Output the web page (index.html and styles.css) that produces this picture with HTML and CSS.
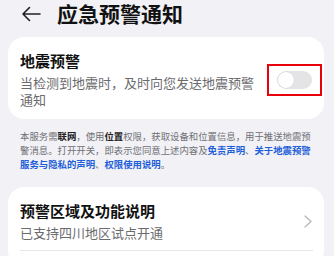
FILE: index.html
```html
<!DOCTYPE html>
<html lang="zh-CN">
<head>
<meta charset="utf-8">
<link rel="stylesheet" href="styles.css">
</head>
<body>
<div class="page">
  <header class="header">
    <svg class="back" width="20" height="16" viewBox="0 0 20 16"><path d="M19 8H2M8.5 1.5L2 8l6.5 6.5" fill="none" stroke="#222" stroke-width="1.6" stroke-linecap="round" stroke-linejoin="round"/></svg>
    <h1 class="title">应急预警通知</h1>
  </header>

  <section class="card card-switch">
    <div class="text">
      <div class="item-title">地震预警</div>
      <div class="item-sub">当检测到地震时，及时向您发送地震预警通知</div>
    </div>
    <div class="mark">
      <div class="toggle"><div class="knob"></div></div>
    </div>
  </section>

  <p class="notes">本服务需<b>联网</b>，使用<b>位置</b>权限，获取设备和位置信息，用于推送地震预警消息。打开开关，即表示您同意上述内容及<a class="link">免责声明</a>、<a class="link">关于地震预警服务与隐私的声明</a>、<a class="link">权限使用说明</a>。</p>

  <section class="card card-list">
    <div class="row">
      <div class="row-text">
        <div class="item-title">预警区域及功能说明</div>
        <div class="row-sub">已支持四川地区试点开通</div>
      </div>
      <svg class="chev" width="8" height="13" viewBox="0 0 8 13"><path d="M1 1l6 5.5L1 12" fill="none" stroke="#b8b8bc" stroke-width="1.3" stroke-linecap="round" stroke-linejoin="round"/></svg>
    </div>
  </section>
</div>
</body>
</html>
```

FILE: styles.css
```css
* { box-sizing: border-box; margin: 0; padding: 0; }
html, body { width: 334px; height: 256px; overflow: hidden; }
body {
  background: #f1f1f6;
  font-family: "Noto Sans CJK SC", "Noto Sans", sans-serif;
  color: #111;
}
.page { padding: 0 10px 0 8px; }
.header {
  height: 26px;
  display: flex;
  align-items: center;
  padding-left: 13px;
  margin-bottom: 11px;
}
.back { display: block; margin-top: 1px; }
.title {
  margin-left: 16px;
  font-size: 21px;
  font-weight: 700;
  line-height: 26px;
  color: #111;
}
.card {
  background: #fff;
  border-radius: 16px;
}
.card-switch {
  display: flex;
  align-items: center;
  padding: 15px 2px 11px 12px;
}
.text { flex: 1; min-width: 0; padding-right: 8px; }
.item-title {
  font-size: 15px;
  font-weight: 700;
  line-height: 18px;
  color: #111;
}
.item-sub {
  margin-top: 4px;
  font-size: 13px;
  line-height: 17px;
  color: #6b6b6e;
}
.mark {
  width: 55px;
  height: 32px;
  border: 2px solid #e8000b;
  display: flex;
  align-items: center;
  justify-content: center;
}
.toggle {
  width: 35px;
  height: 18px;
  border-radius: 9px;
  background: #e4e4e6;
  position: relative;
}
.knob {
  position: absolute;
  left: 1px;
  top: 1px;
  width: 16px;
  height: 16px;
  border-radius: 50%;
  background: #fff;
  box-shadow: 0 0 0 0.5px #d0d0d4;
}
.notes {
  padding: 10px 10px 0 12px;
  font-size: 9.4px;
  line-height: 14px;
  color: #707074;
  height: 68px;
}
.notes b { color: #222; font-weight: 700; }
.link { color: #1f5fd9; font-weight: 700; }
.card-list {
  padding: 14px 11px 0 12px;
  height: 80px;
}
.row {
  display: flex;
  align-items: center;
  padding-bottom: 7px;
  border-bottom: 1px solid #e6e6ea;
}
.row-text { flex: 1; }
.row-sub {
  margin-top: 2px;
  font-size: 13px;
  line-height: 20px;
  color: #6b6b6e;
}
.card-list .item-title { line-height: 20px; }
.chev { display: block; margin-right: 1px; margin-bottom: 2px; }
```
